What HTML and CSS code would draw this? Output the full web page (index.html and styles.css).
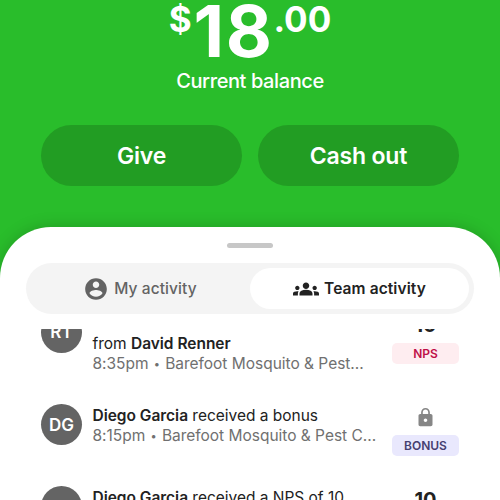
FILE: index.html
```html
<!DOCTYPE html>
<html lang="en">
<head>
<meta charset="utf-8">
<title>Balance</title>
<link rel="stylesheet" href="styles.css">
</head>
<body>
<main class="app">
  <section class="hero">
    <div class="amount"><span class="currency">$</span><span class="whole">18</span><span class="cents">.00</span></div>
    <div class="caption">Current balance</div>
    <div class="actions">
      <button class="action">Give</button>
      <button class="action">Cash out</button>
    </div>
  </section>
  <section class="sheet">
    <div class="handle"></div>
    <nav class="tabs">
      <button class="tab tab-mine"><svg class="tab-icon" viewBox="0 0 24 24"><path d="M12 2C6.48 2 2 6.48 2 12s4.48 10 10 10 10-4.48 10-10S17.52 2 12 2zm0 3c1.66 0 3 1.34 3 3s-1.34 3-3 3-3-1.34-3-3 1.34-3 3-3zm0 14.2c-2.5 0-4.71-1.28-6-3.22.03-1.99 4-3.08 6-3.08 1.99 0 5.97 1.09 6 3.08-1.29 1.94-3.5 3.22-6 3.22z"/></svg><span>My activity</span></button>
      <button class="tab tab-team"><svg class="tab-icon" viewBox="0 0 24 24"><path d="M4 13c1.1 0 2-.9 2-2s-.9-2-2-2-2 .9-2 2 .9 2 2 2zm1.13 1.1c-.37-.06-.74-.1-1.13-.1-.99 0-1.93.21-2.78.58C.48 14.9 0 15.62 0 16.43V18h4.5v-1.61c0-.83.23-1.61.63-2.29zM20 13c1.1 0 2-.9 2-2s-.9-2-2-2-2 .9-2 2 .9 2 2 2zm4 3.43c0-.81-.48-1.53-1.22-1.85-.85-.37-1.79-.58-2.78-.58-.39 0-.76.04-1.13.1.4.68.63 1.46.63 2.29V18H24v-1.57zm-7.76-2.78c-1.17-.52-2.61-.9-4.24-.9s-3.07.39-4.24.9C6.68 14.13 6 15.21 6 16.39V18h12v-1.61c0-1.18-.68-2.26-1.76-2.74zM9 9c0 1.66 1.34 3 3 3s3-1.34 3-3-1.34-3-3-3-3 1.34-3 3z"/></svg><span>Team activity</span></button>
    </nav>
    <div class="feed">
      <article class="row row-first">
        <div class="avatar">RT</div>
        <div class="info">
          <p class="title">from <b>David Renner</b></p>
          <p class="meta">8:35pm <span class="dot">•</span> Barefoot Mosquito &amp; Pest...</p>
        </div>
        <div class="result"><span class="score">10</span><span class="badge nps">NPS</span></div>
      </article>
      <article class="row row-bonus">
        <div class="avatar">DG</div>
        <div class="info">
          <p class="title"><b>Diego Garcia</b> received a bonus</p>
          <p class="meta">8:15pm <span class="dot">•</span> Barefoot Mosquito &amp; Pest C...</p>
        </div>
        <div class="result"><svg class="lock" viewBox="0 0 24 24"><path d="M18 8h-1V6c0-2.76-2.24-5-5-5S7 3.24 7 6v2H6c-1.1 0-2 .9-2 2v10c0 1.1.9 2 2 2h12c1.1 0 2-.9 2-2V10c0-1.1-.9-2-2-2zm-6 9c-1.1 0-2-.9-2-2s.9-2 2-2 2 .9 2 2-.9 2-2 2zm3.1-9H8.9V6c0-1.71 1.39-3.1 3.1-3.1s3.1 1.39 3.1 3.1v2z"/></svg><span class="badge bonus">BONUS</span></div>
      </article>
      <article class="row">
        <div class="avatar"></div>
        <div class="info">
          <p class="title"><b>Diego Garcia</b> received a NPS of 10</p>
        </div>
        <div class="result"><span class="score">10</span></div>
      </article>
    </div>
  </section>
</main>
</body>
</html>
```
FILE: styles.css
```css
* { box-sizing: border-box; }

body {
  margin: 0;
  font-family: Inter, "Liberation Sans", sans-serif;
}

.app {
  height: 500px;
  overflow: hidden;
  background: #29bd2b;
  display: flex;
  flex-direction: column;
}

.hero {
  height: 227px;
  flex: none;
  color: #fff;
}

.amount {
  display: flex;
  justify-content: center;
  height: 67px;
  font-weight: 700;
}

.whole {
  margin: 0 0 0 1px;
  font-size: 71px;
  line-height: 62px;
  letter-spacing: 1.5px;
}

.currency,
.cents {
  font-size: 35px;
  line-height: 39px;
  font-weight: 650;
}

.currency { margin-right: 1px; }

.caption {
  height: 28px;
  line-height: 28px;
  text-align: center;
  font-size: 20px;
  font-weight: 500;
  letter-spacing: -0.4px;
}

.actions {
  display: flex;
  gap: 16px;
  padding: 0 41px;
  margin-top: 29.6px;
}

.action {
  flex: 1;
  height: 61.5px;
  padding: 0;
  border: 0;
  border-radius: 31px;
  background: #229d23;
  color: #fff;
  font: 600 23px/62px Inter, sans-serif;
  letter-spacing: -0.2px;
}

.sheet {
  flex: 1;
  min-height: 0;
  display: flex;
  flex-direction: column;
  background: #fff;
  border-radius: 51px 51px 0 0;
  box-shadow: 0 0 16px rgba(0, 0, 0, 0.18);
}

.handle {
  flex: none;
  width: 46px;
  height: 5px;
  margin: 15.5px auto 0;
  border-radius: 3px;
  background: #c7c7c7;
}

.tabs {
  flex: none;
  display: flex;
  height: 51px;
  margin: 15.5px 26px 0;
  padding: 5px;
  border-radius: 26px;
  background: #f4f4f4;
}

.tab {
  flex: 1;
  display: flex;
  align-items: center;
  justify-content: center;
  gap: 5px;
  padding: 0;
  border: 0;
  border-radius: 21px;
  background: none;
  color: #636363;
  font: 500 15.5px/20px Inter, sans-serif;
  letter-spacing: 0.1px;
}

.tab-mine .tab-icon { margin-left: -1px; }

.tab-team {
  background: #fff;
  color: #222;
  font-weight: 600;
}

.tab-icon {
  width: 26px;
  height: 26px;
  fill: currentColor;
}

.feed {
  flex: 1;
  min-height: 0;
  overflow: hidden;
  margin-top: 15px;
  padding: 0 41px;
}

.row {
  display: flex;
  height: 82px;
}

.row-first {
  height: 92px;
  margin-top: -17px;
}

.avatar {
  flex: none;
  width: 41px;
  height: 41px;
  border-radius: 50%;
  background: #646464;
  color: #fff;
  font-size: 17px;
  font-weight: 600;
  line-height: 42px;
  text-align: center;
}

.row-first .avatar { line-height: 40px; }

.info {
  width: 299.5px;
  padding: 1px 0 0 10.5px;
}

.row-first .info { padding-top: 21px; }

.title,
.meta {
  margin: 0;
  font-size: 15.5px;
  line-height: 21px;
  letter-spacing: -0.02px;
  white-space: nowrap;
}

.title { color: #222; }
.title b { font-weight: 600; }

.meta {
  color: #707070;
  line-height: 20px;
}

.dot {
  display: inline-block;
  width: 8px;
  font-size: 11px;
  line-height: 1;
  text-align: center;
  vertical-align: 1px;
}

.result {
  width: 67px;
  margin-left: 11px;
  display: flex;
  flex-direction: column;
  align-items: center;
}

.score {
  height: 28px;
  line-height: 28px;
  font-size: 20px;
  font-weight: 700;
  color: #222;
}

.row-first .score {
  height: 31px;
  line-height: 27px;
}

.lock {
  width: 21px;
  height: 21px;
  margin: 3px 0 7px;
  fill: #868686;
}

.badge {
  width: 67px;
  height: 20.5px;
  border-radius: 5px;
  font-size: 12px;
  font-weight: 600;
  line-height: 21px;
  text-align: center;
}

.nps {
  background: #feedf0;
  color: #c01048;
}

.bonus {
  background: #e9e8fd;
  color: #464070;
}
```
